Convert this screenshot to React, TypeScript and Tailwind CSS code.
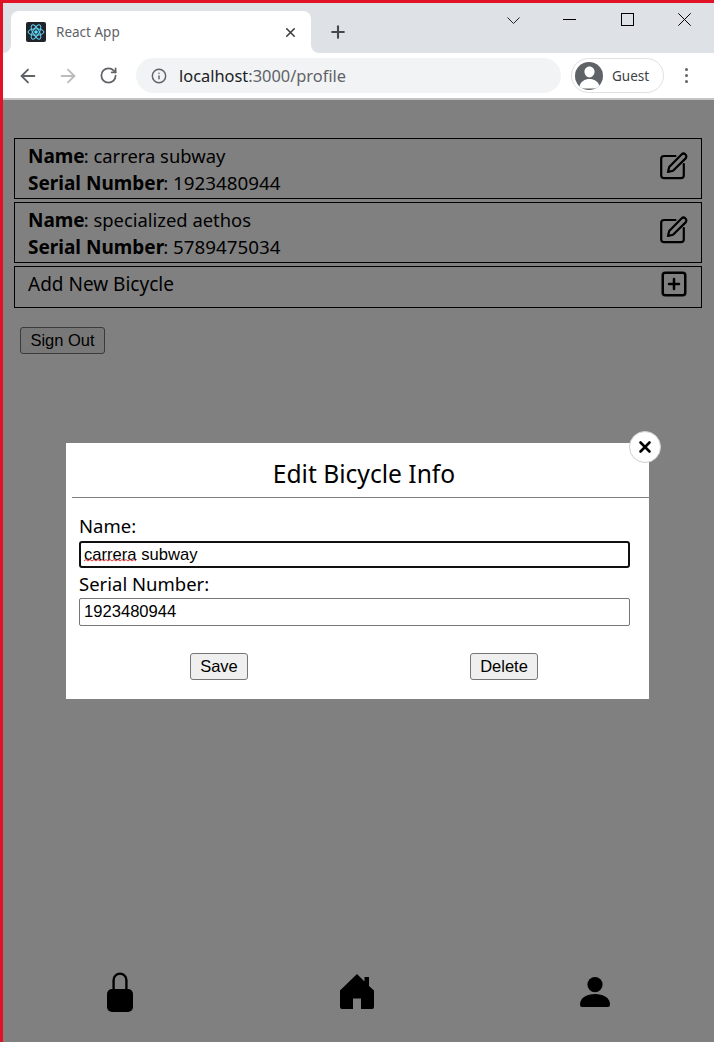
import { ArrowLeft, ArrowRight, RotateCw, Info, X, Plus, SquarePlus } from 'lucide-react';
import { IoPerson } from 'react-icons/io5';

const uiFont = "font-['Noto_Sans',sans-serif]";

function ReactFavicon() {
  return (
    <svg width="20" height="20" viewBox="0 0 20 20" className="rounded-[2px] bg-[#20232a]">
      <circle cx="10" cy="10" r="1.8" fill="#61dafb" />
      <g fill="none" stroke="#61dafb" strokeWidth="1">
        <ellipse cx="10" cy="10" rx="8" ry="3.2" />
        <ellipse cx="10" cy="10" rx="8" ry="3.2" transform="rotate(60 10 10)" />
        <ellipse cx="10" cy="10" rx="8" ry="3.2" transform="rotate(120 10 10)" />
      </g>
    </svg>
  );
}

function WindowControls() {
  return (
    <div className="ml-auto mr-[23px] mt-[10px] flex h-[13px] items-center self-start text-black">
      <svg width="13" height="7" viewBox="0 0 13 7" className="mt-[1px]">
        <path d="M0.5 0.5 L6.5 6.5 L12.5 0.5" fill="none" stroke="#202124" strokeWidth="1" />
      </svg>
      <svg width="13" height="1" viewBox="0 0 13 1" className="ml-[43px]">
        <path d="M0 0.5 H13" stroke="#000" strokeWidth="1" />
      </svg>
      <svg width="13" height="13" viewBox="0 0 13 13" className="ml-[45px]">
        <rect x="0.5" y="0.5" width="12" height="12" fill="none" stroke="#000" strokeWidth="1" />
      </svg>
      <svg width="13" height="13" viewBox="0 0 13 13" className="ml-[44px]">
        <path d="M0.3 0.3 L12.7 12.7 M12.7 0.3 L0.3 12.7" stroke="#000" strokeWidth="1" />
      </svg>
    </div>
  );
}

function EditIcon() {
  return (
    <svg width="28" height="28" viewBox="0 0 28 28" className="-mt-[5px]" fill="none" stroke="#000" strokeWidth="2.2" strokeLinecap="round" strokeLinejoin="round">
      <path d="M15.5 4 H4 Q1.2 4 1.2 6.8 V23.2 Q1.2 26.2 4.2 26.2 H20.8 Q23.8 26.2 23.8 23.2 V12" />
      <path d="M8 20 L9.2 15 L21.5 2.6 A2.6 2.6 0 0 1 25.6 6.4 L13 18.8 Z" />
    </svg>
  );
}

function LockIcon() {
  return (
    <svg width="26" height="40" viewBox="0 0 26 40">
      <path d="M6.6 19V8a6.4 6.4 0 0 1 12.8 0v11" fill="none" stroke="#000" strokeWidth="2.4" />
      <rect x="0" y="17" width="26" height="23" rx="5" fill="#000" />
    </svg>
  );
}

function HomeIcon() {
  return (
    <svg width="34" height="36" viewBox="0 0 34 36" className="ml-[207px] mt-[2px]">
      <path
        d="M17 0 L24.5 7.5 V3 H29 V12 L34 16.5 V33 a2 2 0 0 1 -2 2 H21 V24.5 H13 V35 H2 a2 2 0 0 1 -2 -2 V16.5 Z"
        fill="#000"
      />
    </svg>
  );
}

function PersonIcon() {
  return (
    <svg width="30" height="30" viewBox="0 0 30 30" className="ml-[206px] mt-[5px]">
      <circle cx="15" cy="7.6" r="7.6" fill="#000" />
      <path d="M0 27.5 C0 20.5 7 17 15 17 C23 17 30 20.5 30 27.5 Q30 30 28 30 H2 Q0 30 0 27.5 Z" fill="#000" />
    </svg>
  );
}

function BicycleCard({ name, serial }: { name: string; serial: string }) {
  return (
    <div className="flex h-[61px] items-center justify-between border border-black pl-[13px] pr-[13px]">
      <div className="pt-[1px] text-[19px] leading-[26px] text-black">
        <div><b>Name</b><span className="-ml-[1px] text-[18.4px]">: {name}</span></div>
        <div className="mt-[1px]"><b>Serial Number</b><span className="-ml-[1px] text-[18.8px]">: {serial}</span></div>
      </div>
      <EditIcon />
    </div>
  );
}

function EditModal() {
  return (
    <div className="absolute left-[63px] top-[343px] h-[256px] w-[583px] bg-white">
      <div className="absolute -right-[12px] -top-[12px] flex h-[32px] w-[32px] items-center justify-center rounded-full border border-[#cfcfcf] bg-white">
        <X className="h-[18px] w-[18px] text-black" strokeWidth={3.5} />
      </div>
      <div className="ml-[6px] flex h-[55px] items-center justify-center border-b border-[#808080] pl-[7px] pt-[8px] text-[24.6px] text-black">
        Edit Bicycle Info
      </div>
      <div className="mx-[13px] mt-[14px] w-[551px] text-[18.5px] leading-[27px] text-black">
        <label className="block h-[29px]">Name:</label>
        <div className="relative">
          <input
            readOnly
            value="carrera subway"
            className="block h-[27px] w-full rounded-[3px] border-2 border-[#101010] px-[3px] pb-[1px] font-['Liberation_Sans',sans-serif] text-[16.6px] text-black outline-none"
          />
          <svg width="52" height="3" viewBox="0 0 52 3" className="absolute left-[5px] top-[18px]">
            <path
              d="M0 2 L2 0.5 L4 2 L6 0.5 L8 2 L10 0.5 L12 2 L14 0.5 L16 2 L18 0.5 L20 2 L22 0.5 L24 2 L26 0.5 L28 2 L30 0.5 L32 2 L34 0.5 L36 2 L38 0.5 L40 2 L42 0.5 L44 2 L46 0.5 L48 2 L50 0.5 L52 2"
              fill="none"
              stroke="#e02020"
              strokeWidth="0.9"
            />
          </svg>
        </div>
        <label className="mt-[2px] block h-[28px]">Serial Number:</label>
        <input
          readOnly
          value="1923480944"
          className="block h-[28px] w-full rounded-[2px] border border-[#767676] px-[4px] font-['Liberation_Sans',sans-serif] text-[16.6px] text-black outline-none"
        />
      </div>
      <div className="mt-[27px] flex font-['Liberation_Sans',sans-serif] text-[16.5px] text-black">
        <button className="ml-[124px] h-[27px] w-[58px] rounded-[3px] border border-[#767676] bg-[#efefef]">Save</button>
        <button className="ml-[222px] h-[27px] w-[68px] rounded-[3px] border border-[#767676] bg-[#efefef]">Delete</button>
      </div>
    </div>
  );
}

export default function App() {
  return (
    <div className={`flex h-[1042px] w-[714px] flex-col overflow-hidden border-l-[3px] border-t-[3px] border-[#e11226] ${uiFont}`}>
      {/* tab strip */}
      <div className="flex h-[50px] shrink-0 items-end bg-[#dee1e6] pl-[8px]">
        <div className="relative flex h-[42px] w-[300px] items-center rounded-t-[8px] bg-white pl-[15px] pr-[13px]">
          {/* concave corners at the foot of the tab */}
          <div className="absolute -left-[8px] bottom-0 h-[8px] w-[8px] bg-white">
            <div className="h-full w-full rounded-br-[8px] bg-[#dee1e6]" />
          </div>
          <div className="absolute -right-[8px] bottom-0 h-[8px] w-[8px] bg-white">
            <div className="h-full w-full rounded-bl-[8px] bg-[#dee1e6]" />
          </div>
          <ReactFavicon />
          <span className="ml-[10px] flex-1 text-[13.5px] text-[#5f6368]">React App</span>
          <X className="h-[15px] w-[15px] text-[#3c4043]" strokeWidth={2.5} />
        </div>
        <Plus className="mb-[11px] ml-[17px] h-[20px] w-[20px] text-[#45494e]" strokeWidth={2.5} />
        <WindowControls />
      </div>

      {/* toolbar */}
      <div className="flex h-[47px] shrink-0 items-center border-b-2 border-[#c4c4c4] bg-white pl-[14px]">
        <ArrowLeft className="h-[22px] w-[22px] text-[#5f6368]" strokeWidth={2} />
        <ArrowRight className="ml-[18px] h-[22px] w-[22px] text-[#babcbe]" strokeWidth={2} />
        <RotateCw className="ml-[20px] h-[19px] w-[19px] text-[#5f6368]" strokeWidth={2.2} />
        <div className="ml-[18px] flex h-[35px] w-[425px] items-center rounded-full bg-[#f1f3f4] pl-[15px]">
          <Info className="h-[16px] w-[16px] text-[#5f6368]" strokeWidth={2.2} />
          <span className="ml-[12px] pt-[2px] text-[16.4px] text-[#5f6368]">
            <span className="text-[#202124]">localhost</span>:3000/profile
          </span>
        </div>
        <div className="ml-[10px] flex h-[35px] w-[93px] items-center rounded-full border border-[#e0e0e0] pl-[3px]">
          <div className="flex h-[28px] w-[28px] items-end justify-center overflow-hidden rounded-full bg-[#5f6368]">
            <IoPerson className="h-[25px] w-[25px] text-white" />
          </div>
          <span className="ml-[9px] pt-[2px] text-[13.5px] text-[#3c4043]">Guest</span>
        </div>
        <div className="ml-[21px] flex flex-col gap-[3px]">
          <span className="h-[3px] w-[3px] rounded-full bg-[#5f6368]" />
          <span className="h-[3px] w-[3px] rounded-full bg-[#5f6368]" />
          <span className="h-[3px] w-[3px] rounded-full bg-[#5f6368]" />
        </div>
      </div>

      {/* page */}
      <div className="relative flex flex-1 flex-col bg-[#808080]">
        <div className="mt-[38px] flex flex-col gap-[3px] pl-[11px] pr-[12px]">
          <BicycleCard name="carrera subway" serial="1923480944" />
          <BicycleCard name="specialized aethos" serial="5789475034" />
          <div className="flex h-[42px] items-center justify-between border border-black pl-[13px] pr-[12px] text-[19px] text-black">
            <span className="-mt-[6px]">Add New Bicycle</span>
            <SquarePlus className="-mt-[6px] h-[30px] w-[30px]" strokeWidth={2} />
          </div>
        </div>
        <button className="ml-[17px] mt-[19px] h-[27px] w-[85px] rounded-[3px] border border-[#3b3b3b] bg-[#787878] font-['Liberation_Sans',sans-serif] text-[16.5px] text-black">
          Sign Out
        </button>

        <nav className="mb-[30px] ml-[104px] mt-auto flex items-start">
          <LockIcon />
          <HomeIcon />
          <PersonIcon />
        </nav>

        <EditModal />
      </div>
    </div>
  );
}
